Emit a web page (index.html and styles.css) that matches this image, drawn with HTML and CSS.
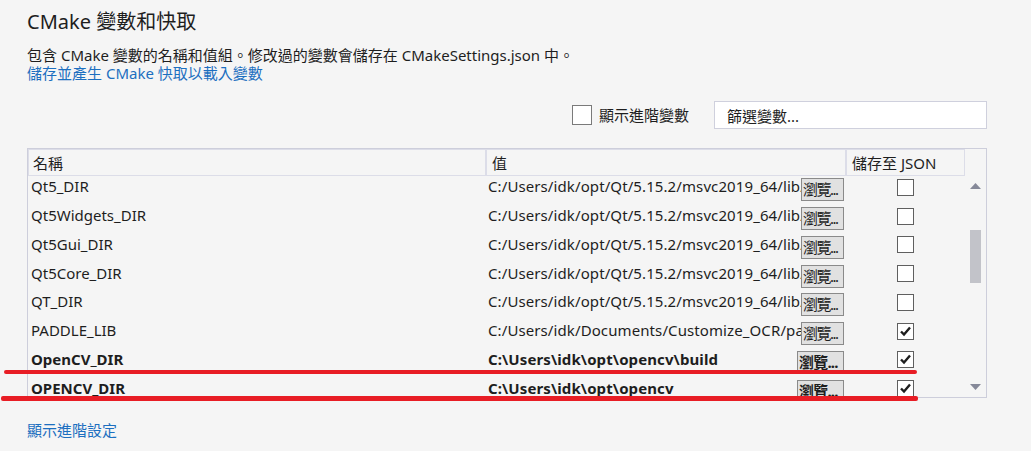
FILE: index.html
```html
<!DOCTYPE html>
<html lang="zh-Hant">
<head>
<meta charset="utf-8">
<title>CMake 變數和快取</title>
<link rel="stylesheet" href="styles.css">
</head>
<body>
<div class="page">
  <h1 class="title">CMake 變數和快取</h1>
  <p class="desc">包含 CMake 變數的名稱和值組。修改過的變數會儲存在 CMakeSettings.json 中。</p>
  <a class="link" href="#">儲存並產生 CMake 快取以載入變數</a>
  <div class="toolbar">
    <label class="adv"><span class="bigcb"></span>顯示進階變數</label>
    <div class="filter">篩選變數...</div>
  </div>
  <div class="table">
    <div class="thead">
      <div class="th th-name">名稱</div>
      <div class="th th-val">值</div>
      <div class="th th-json">儲存至 JSON</div>
    </div>
    <div class="tbody">
      <div class="rows">
        <div class="row">
          <div class="c-name">Qt5_DIR</div>
          <div class="c-val"><span class="txt">C:/Users/idk/opt/Qt/5.15.2/msvc2019_64/lib/cmake/Qt5</span><span class="btn">瀏覽...</span></div>
          <div class="c-json"><span class="cb"></span></div>
        </div>
        <div class="row">
          <div class="c-name">Qt5Widgets_DIR</div>
          <div class="c-val"><span class="txt">C:/Users/idk/opt/Qt/5.15.2/msvc2019_64/lib/cmake/Qt5Widgets</span><span class="btn">瀏覽...</span></div>
          <div class="c-json"><span class="cb"></span></div>
        </div>
        <div class="row">
          <div class="c-name">Qt5Gui_DIR</div>
          <div class="c-val"><span class="txt">C:/Users/idk/opt/Qt/5.15.2/msvc2019_64/lib/cmake/Qt5Gui</span><span class="btn">瀏覽...</span></div>
          <div class="c-json"><span class="cb"></span></div>
        </div>
        <div class="row">
          <div class="c-name">Qt5Core_DIR</div>
          <div class="c-val"><span class="txt">C:/Users/idk/opt/Qt/5.15.2/msvc2019_64/lib/cmake/Qt5Core</span><span class="btn">瀏覽...</span></div>
          <div class="c-json"><span class="cb"></span></div>
        </div>
        <div class="row">
          <div class="c-name">QT_DIR</div>
          <div class="c-val"><span class="txt">C:/Users/idk/opt/Qt/5.15.2/msvc2019_64/lib/cmake/Qt5</span><span class="btn">瀏覽...</span></div>
          <div class="c-json"><span class="cb"></span></div>
        </div>
        <div class="row">
          <div class="c-name">PADDLE_LIB</div>
          <div class="c-val"><span class="txt">C:/Users/idk/Documents/Customize_OCR/paddle_inference</span><span class="btn">瀏覽...</span></div>
          <div class="c-json"><span class="cb"><svg viewBox="0 0 15 15" width="15" height="15"><polyline points="3,7.5 6,10.5 12,3.5" fill="none" stroke="#1e1e1e" stroke-width="2.4"/></svg></span></div>
        </div>
        <div class="row bold">
          <div class="c-name">OpenCV_DIR</div>
          <div class="c-val"><span class="txt">C:\Users\idk\opt\opencv\build</span><span class="btn">瀏覽...</span></div>
          <div class="c-json"><span class="cb"><svg viewBox="0 0 15 15" width="15" height="15"><polyline points="3,7.5 6,10.5 12,3.5" fill="none" stroke="#1e1e1e" stroke-width="2.4"/></svg></span></div>
        </div>
        <div class="row bold">
          <div class="c-name">OPENCV_DIR</div>
          <div class="c-val"><span class="txt">C:\Users\idk\opt\opencv</span><span class="btn">瀏覽...</span></div>
          <div class="c-json"><span class="cb"><svg viewBox="0 0 15 15" width="15" height="15"><polyline points="3,7.5 6,10.5 12,3.5" fill="none" stroke="#1e1e1e" stroke-width="2.4"/></svg></span></div>
        </div>
      </div>
      <div class="sb">
        <svg class="arrow" viewBox="0 0 11 6" width="11" height="6"><polygon points="5.5,0 11,6 0,6" fill="#868999"/></svg>
        <div class="track"><div class="thumb"></div></div>
        <svg class="arrow" viewBox="0 0 11 6" width="11" height="6"><polygon points="0,0 11,0 5.5,6" fill="#868999"/></svg>
      </div>
    </div>
  </div>
  <a class="link bottom" href="#">顯示進階設定</a>
</div>
<div class="mark m1"></div>
<div class="mark m2"></div>
</body>
</html>
```
FILE: styles.css
```css
* { box-sizing: border-box; }
html, body { margin: 0; background: #f5f5f5; }
body {
  font-family: "Noto Sans", "Noto Sans CJK TC", sans-serif;
  font-size: 15px;
  color: #1e1e1e;
  width: 1031px;
  height: 451px;
  overflow: hidden;
  position: relative;
}
.page {
  padding: 8px 44px 0 27px;
  display: flex;
  flex-direction: column;
  align-items: flex-start;
}
.title {
  margin: 0;
  font-size: 20px;
  font-weight: 400;
  line-height: 28px;
}
.desc {
  margin: 10px 0 0;
  line-height: 18px;
}
.link {
  color: #1c6fc0;
  line-height: 18px;
  text-decoration: none;
}
.toolbar {
  align-self: stretch;
  margin-top: 19px;
  height: 28px;
  display: flex;
  justify-content: flex-end;
  align-items: center;
}
.adv {
  display: flex;
  align-items: center;
  gap: 7px;
  margin-right: 25px;
  line-height: 20px;
}
.bigcb {
  width: 20px;
  height: 20px;
  border: 1px solid #7a7a7a;
  background: #fff;
}
.filter {
  width: 273px;
  height: 28px;
  background: #fff;
  border: 1px solid #cfd0dd;
  padding-left: 12px;
  display: flex;
  align-items: center;
}
.table {
  align-self: stretch;
  margin-top: 19px;
  height: 250px;
  border: 1px solid #cdcedb;
  display: flex;
  flex-direction: column;
}
.thead {
  display: flex;
  height: 27px;
  flex: none;
}
.th {
  border: 1px solid #dcdde8;
  display: flex;
  align-items: center;
  padding-left: 4px;
}
.th-name { width: 458px; }
.th-val { width: 360px; padding-left: 5px; }
.th-json { width: 119px; padding-left: 5px; }
.tbody {
  flex: 1;
  display: flex;
  overflow: hidden;
}
.rows {
  width: 937px;
  flex: none;
  margin-top: -4px;
}
.row {
  height: 28.75px;
  display: flex;
  align-items: center;
}
.row.bold { font-weight: 700; }
.c-name {
  width: 458px;
  padding-left: 3px;
  white-space: nowrap;
}
.c-val {
  width: 360px;
  display: flex;
  align-items: center;
  padding-left: 2px;
}
.txt {
  flex: 1;
  min-width: 0;
  overflow: hidden;
  white-space: nowrap;
  letter-spacing: 0.1px;
}
.btn {
  flex: none;
  width: 43px;
  height: 23px;
  margin: 7px 2px 0 0;
  border: 1px solid #8a8a8a;
  background: #e1e1e1;
  padding-left: 1px;
  line-height: 20px;
  letter-spacing: -1.5px;
  overflow: hidden;
  white-space: nowrap;
  font-weight: 400;
}
.bold .btn {
  width: 47px;
  font-weight: 700;
  letter-spacing: -0.8px;
}
.c-json {
  width: 119px;
  display: flex;
  justify-content: center;
}
.cb {
  width: 17px;
  height: 17px;
  margin-top: 2px;
  border: 1px solid #5f5f5f;
  background: #fff;
  display: flex;
  align-items: center;
  justify-content: center;
}
.cb svg { display: block; }
.sb {
  width: 21px;
  flex: none;
  display: flex;
  flex-direction: column;
  align-items: center;
  padding: 7px 0;
}
.arrow { display: block; flex: none; }
.track {
  flex: 1;
  display: flex;
  flex-direction: column;
  align-items: center;
}
.thumb {
  margin-top: 41px;
  width: 11px;
  height: 53px;
  background: #c2c3c9;
}
.bottom { margin-top: 23px; }
.mark {
  position: absolute;
  height: 4px;
  background: #e81d25;
  border-radius: 2px;
}
.m1 { left: 4px; top: 370px; width: 913px; }
.m2 { left: 1px; top: 396px; width: 917px; height: 5px; }
```
